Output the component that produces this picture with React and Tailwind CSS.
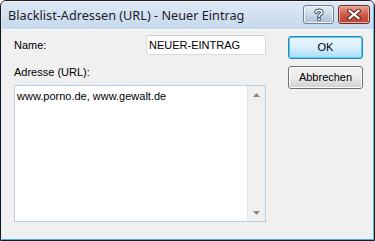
import React from 'react';

const ui = { fontFamily: '"Liberation Sans", Arial, sans-serif' };
const title = { fontFamily: '"Noto Sans", "Open Sans", sans-serif' };

function HelpGlyph() {
  return (
    <svg width="12" height="13" viewBox="0 0 12 13">
      <path d="M3 4.2 C3 1.8 9 1.6 9 4.4 C9 6.4 6 6.4 6 8.4" fill="none" stroke="#3d4a5c" strokeWidth="3.6" strokeLinecap="round" />
      <rect x="4.2" y="9.6" width="3.6" height="3.2" rx="1" fill="#3d4a5c" />
      <path d="M3 4.2 C3 1.8 9 1.6 9 4.4 C9 6.4 6 6.4 6 8.4" fill="none" stroke="#fff" strokeWidth="1.6" strokeLinecap="round" />
      <rect x="5.1" y="10.4" width="1.8" height="1.7" fill="#fff" />
    </svg>
  );
}

function CloseGlyph() {
  return (
    <svg width="14" height="11" viewBox="0 0 14 11">
      <path d="M2.5 1.8 L11.5 9.2 M11.5 1.8 L2.5 9.2" stroke="#5a1f18" strokeWidth="4.2" strokeLinecap="square" />
      <path d="M2.5 1.8 L11.5 9.2 M11.5 1.8 L2.5 9.2" stroke="#fff" strokeWidth="2.2" strokeLinecap="square" />
    </svg>
  );
}

function Arrow({ up }) {
  return (
    <svg width="7" height="4" viewBox="0 0 7 4">
      <path d={up ? 'M0 4 L3.5 0 L7 4 Z' : 'M0 0 L3.5 4 L7 0 Z'} fill="#8a8a8a" />
    </svg>
  );
}

function Button({ children, primary }) {
  return (
    <div
      className={`w-[75px] h-[23px] rounded-[3px] border flex items-center justify-center text-[11px] text-black ${
        primary
          ? 'border-[#3c7fb1] bg-gradient-to-b from-[#eaf6fd] via-[#d9f0fc] to-[#a7d9f5] shadow-[inset_0_0_0_1px_#48d0f9]'
          : 'border-[#707070] bg-gradient-to-b from-[#f2f2f2] via-[#ebebeb] to-[#cfcfcf] shadow-[inset_0_0_0_1px_#fcfcfc]'
      }`}
      style={ui}
    >
      {children}
    </div>
  );
}

export default function App() {
  return (
    <div className="w-[375px] h-[241px] rounded-t-[6px] border border-[#1c1c1c] bg-[#bfd3ea] overflow-hidden">
      <div className="h-full rounded-t-[5px] border border-t-[#eef4fb] border-l-[#d7e5f4] border-r-[#5cb6e2] border-b-[#45b0e4] flex flex-col">
        {/* title bar */}
        <div className="h-[27px] flex items-start bg-gradient-to-b from-[#dde8f5] to-[#c7d9ee] pl-[6px] pr-[3px]">
          <span className="mt-[5px] text-[12.7px] leading-[16px] text-[#1e1e1e]" style={title}>
            Blacklist-Adressen (URL) - Neuer Eintrag
          </span>
          <div className="ml-auto mt-[3px] flex gap-[4px]">
            <div className="w-[31px] h-[19px] rounded-[3px] border border-[#6f7f94] bg-gradient-to-b from-[#e3ecf6] via-[#c9d8ea] to-[#a9bfd9] shadow-[inset_0_0_0_1px_#f2f7fc] flex items-center justify-center">
              <HelpGlyph />
            </div>
            <div className="w-[32px] h-[19px] rounded-[3px] border border-[#6e2a22] bg-gradient-to-b from-[#e5a093] via-[#cf5a4a] to-[#b8412f] shadow-[inset_0_0_0_1px_#eeb0a4] flex items-center justify-center">
              <CloseGlyph />
            </div>
          </div>
        </div>

        {/* client area */}
        <div className="flex-1 bg-[#f0f0f0] border-t border-[#f7fafd] flex pl-[12px] pt-[5px]" style={ui}>
          <div className="w-[252px] flex flex-col">
            <div className="h-[20px] flex items-center justify-between">
              <span className="text-[11px] text-black">Name:</span>
              <div className="w-[120px] h-[20px] rounded-[2px] border border-[#dadada] border-t-[#cfcfcf] bg-white flex items-center pl-[2px] text-[11px] text-black">
                NEUER-EINTRAG
              </div>
            </div>
            <div className="mt-[10px] h-[14px] flex items-center text-[11px] text-black">Adresse (URL):</div>
            <div className="mt-[6px] h-[137px] border border-[#b6d0e8] bg-white flex">
              <div className="flex-1 pl-[2px] pt-[3px] text-[11px] leading-[14px] text-black">
                www.porno.de, www.gewalt.de
              </div>
              <div className="w-[18px] border-l border-[#e6e6e6] bg-[#f0f0f0] flex flex-col">
                <div className="h-[17px] flex items-center justify-center">
                  <Arrow up />
                </div>
                <div className="flex-1" />
                <div className="h-[17px] flex items-center justify-center">
                  <Arrow />
                </div>
              </div>
            </div>
          </div>
          <div className="ml-[22px] mt-[1px] flex flex-col gap-[7px]">
            <Button primary>OK</Button>
            <Button>Abbrechen</Button>
          </div>
        </div>
      </div>
    </div>
  );
}
